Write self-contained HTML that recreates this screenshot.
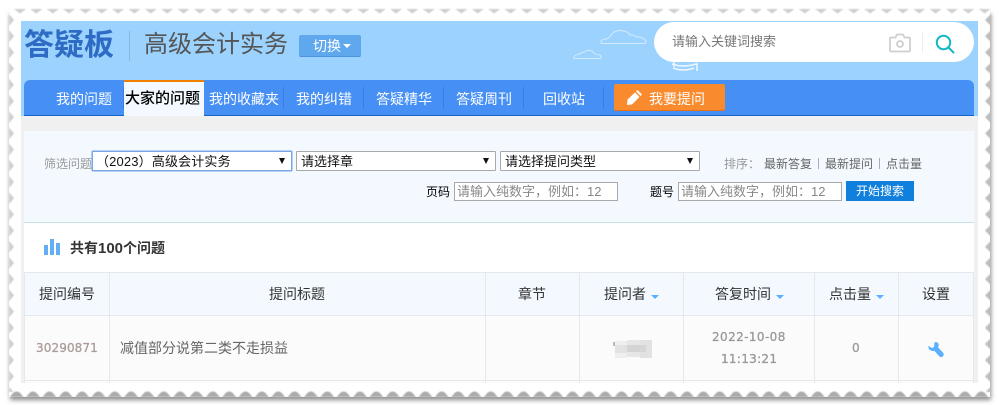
<!DOCTYPE html>
<html lang="zh">
<head>
<meta charset="utf-8">
<title>答疑板</title>
<style>
html,body{margin:0;padding:0;background:#fff;}
body{position:relative;width:999px;height:405px;overflow:hidden;font-family:"Liberation Sans","Noto Sans CJK SC",sans-serif;}
.a{position:absolute;white-space:nowrap;}
.t{position:absolute;white-space:nowrap;line-height:20px;height:20px;}
.sep{position:absolute;top:87px;width:1px;height:22px;background:#3a7fe0;}
.nav{position:absolute;top:89px;line-height:20px;font-size:14px;color:#fff;white-space:nowrap;}
.sel{position:absolute;top:151px;width:198px;height:18px;border:1px solid #a9a9a9;background:#fff;font-size:13px;line-height:20px;color:#111;border-radius:1px;}
.sel span{position:absolute;left:4px;top:0;white-space:nowrap;}
.sel i{position:absolute;right:6px;top:6px;width:0;height:0;border-left:3.5px solid transparent;border-right:3.5px solid transparent;border-top:6px solid #111;}
.inp{position:absolute;top:182px;width:162px;height:17px;border:1px solid #a9a9a9;background:#fff;font-size:13px;line-height:18px;color:#888;}
.inp span{position:absolute;left:2px;top:0;white-space:nowrap;}
.v{position:absolute;top:272px;width:1px;height:111px;background:#e6e9ec;}
.h{position:absolute;left:24px;width:950px;height:1px;background:#e6e9ec;}
.th{position:absolute;top:284px;line-height:20px;font-size:14px;color:#333;white-space:nowrap;}
.ar{position:absolute;top:295px;width:0;height:0;border-left:4px solid transparent;border-right:4px solid transparent;border-top:4px solid #5aafff;}
.dj{font-family:"DejaVu Sans",sans-serif;-webkit-text-stroke:.3px currentColor;}
</style>
</head>
<body>
<svg class="a" style="left:0;top:0" width="999" height="405" viewBox="0 0 999 405">
<defs>
<filter id="b" x="-5%" y="-5%" width="110%" height="110%"><feGaussianBlur stdDeviation="2.4"/></filter>
<filter id="s" x="-1%" y="-1%" width="102%" height="102%"><feGaussianBlur stdDeviation="0.5"/></filter>
<pattern id="pt" patternUnits="userSpaceOnUse" x="12" y="9" width="16.35" height="5"><path d="M2 0H14L8 4.5Z" fill="#cfcfcf"/></pattern>
<pattern id="pl" patternUnits="userSpaceOnUse" x="9" y="12" width="5" height="16.2"><path d="M0 2L5 8L0 14Z" fill="#cfcfcf"/></pattern>
<pattern id="pr" patternUnits="userSpaceOnUse" x="985" y="12" width="6" height="16.2"><path d="M6 2L0 8L6 14Z" fill="#bdbdbd"/></pattern>
<pattern id="pb" patternUnits="userSpaceOnUse" x="25" y="391" width="16.35" height="6"><path d="M1 6L5 1.5Q8 -.5 11 1.500L15 6Z" fill="#ababab"/></pattern>
</defs>
<rect x="10" y="14" width="981" height="386" fill="#8a8a8a" filter="url(#b)"/>
<rect x="9" y="9" width="981" height="388" fill="#fff"/>
<g filter="url(#s)">
<rect x="9" y="9" width="981" height="5" fill="url(#pt)"/>
<rect x="9" y="12" width="5" height="380" fill="url(#pl)"/>
<rect x="985" y="12" width="6" height="380" fill="url(#pr)"/>
<rect x="9" y="391" width="981" height="6" fill="url(#pb)"/>
</g>
</svg>

<!-- Header -->
<div class="a" style="left:21px;top:21px;width:957px;height:362px;background:#f0f0f0"></div>
<div class="a" style="left:21px;top:21px;width:957px;height:95px;background:#9bd2fe"></div>

<div class="a" style="left:24px;top:25px;font-size:30px;line-height:42px;font-weight:bold;color:#2e6bc4">答疑板</div>
<div class="a" style="left:129px;top:31px;width:1px;height:30px;background:#86b8e2"></div>
<div class="a" style="left:144px;top:28px;font-size:24px;line-height:34px;color:#555">高级会计实务</div>
<div class="a" style="left:299px;top:35px;width:62px;height:21px;background:#5fa8ee;border-bottom:1px solid #4b92dc;border-radius:2px"></div>
<div class="a" style="left:313px;top:36px;font-size:14px;line-height:20px;color:#fff">切换</div>
<div class="a" style="left:343px;top:44px;width:0;height:0;border-left:4px solid transparent;border-right:4px solid transparent;border-top:4px solid #fff"></div>

<svg class="a" style="left:570px;top:21px" width="140" height="55" viewBox="0 0 140 55" fill="none" stroke="#d4ebfd" stroke-width="1">
<path d="M4 37.500H30.500Q32.500 34 27 33.500Q24 33 22 30Q17 28 14 31.500Q11 31 10 33Q3 34 4 37.500Z"/>
<path d="M31 22.500Q30 18.500 36 18Q39 17 41 14Q44 9.500 51 9.500Q58 10 60 14Q64 13.500 66 16Q72 15 76 20Q76 22.500 74 22.500Z"/>
<path d="M102 43Q113 47 126 43M103 47Q113 51 124 47M127 42V50M104 41V46" stroke-width="1.500" stroke="#f0f8ff"/>
</svg>

<div class="a" style="left:654px;top:22px;width:320px;height:40px;background:#fff;border-radius:20px"></div>
<div class="t" style="left:672px;top:32px;font-size:13px;color:#777">请输入关键词搜索</div>
<svg class="a" style="left:888px;top:31px" width="24" height="24" viewBox="0 0 24 24" fill="none" stroke="#cfcfcf" stroke-width="1.800">
<path d="M3 6.500H7.500L9 3.500H15L16.500 6.500H21Q22 6.500 22 7.500V19.500Q22 20.500 21 20.500H3Q2 20.500 2 19.500V7.500Q2 6.500 3 6.500Z"/>
<circle cx="12" cy="13" r="3"/>
</svg>
<div class="a" style="left:922px;top:33px;width:1px;height:20px;background:#eee"></div>
<svg class="a" style="left:935px;top:34px" width="20" height="20" viewBox="0 0 20 20" fill="none" stroke="#14b8c4" stroke-width="2">
<circle cx="8.500" cy="8.500" r="6.700"/>
<path d="M13.500 13.500L18.500 18.500" stroke-linecap="round"/>
</svg>

<!-- Nav -->
<div class="a" style="left:24px;top:80px;width:950px;height:35px;background:#4690f5;border-bottom:1px solid #1565c8;border-radius:6px 6px 0 0"></div>
<div class="a" style="left:124px;top:80px;width:80px;height:34px;background:#f3f9ff;border-top:2px solid #f08000"></div>
<div class="nav" style="left:56px">我的问题</div>
<div class="nav" style="left:125px;font-size:15px;color:#000;font-weight:500">大家的问题</div>
<div class="nav" style="left:209px">我的收藏夹</div>
<div class="nav" style="left:296px">我的纠错</div>
<div class="nav" style="left:376px">答疑精华</div>
<div class="nav" style="left:456px">答疑周刊</div>
<div class="nav" style="left:543px">回收站</div>
<div class="sep" style="left:123px"></div>
<div class="sep" style="left:283px"></div>
<div class="sep" style="left:363px"></div>
<div class="sep" style="left:443px"></div>
<div class="sep" style="left:523px"></div>
<div class="sep" style="left:603px"></div>
<div class="a" style="left:614px;top:84px;width:111px;height:26px;background:#f98b2e;border-bottom:1px solid #e8721a;border-radius:2px"></div>
<svg class="a" style="left:626px;top:89px" width="17" height="17" viewBox="0 0 17 17" fill="#fff">
<path d="M11.500 1L16 5.500L14.500 7L10 2.500Z"/>
<path d="M9 3.500L13.500 8L6 15.500L1 16L1.500 10.500Z"/>
</svg>
<div class="nav" style="left:649px">我要提问</div>

<!-- Filter -->
<div class="a" style="left:24px;top:131px;width:950px;height:91px;background:#f3f9ff;border-bottom:1px solid #c8e4e4"></div>
<div class="t" style="left:44px;top:154px;font-size:12px;color:#999">筛选问题</div>
<div class="sel" style="left:92px;border:1px solid #7ba6e6;box-shadow:0 0 0 .5px #7ba6e6"><span style="left:3px;letter-spacing:.15px">（2023）高级会计实务</span><i></i></div>
<div class="sel" style="left:296px"><span>请选择章</span><i></i></div>
<div class="sel" style="left:500px"><span>请选择提问类型</span><i></i></div>
<div class="t" style="left:724px;top:154px;font-size:12px;color:#999">排序：</div>
<div class="t" style="left:764px;top:154px;font-size:12px;color:#666">最新答复</div>
<div class="a" style="left:818px;top:158px;width:1px;height:11px;background:#aab"></div>
<div class="t" style="left:825px;top:154px;font-size:12px;color:#666">最新提问</div>
<div class="a" style="left:879px;top:158px;width:1px;height:11px;background:#aab"></div>
<div class="t" style="left:886px;top:154px;font-size:12px;color:#666">点击量</div>

<div class="t" style="left:426px;top:182px;font-size:12px;color:#000">页码</div>
<div class="inp" style="left:454px"><span>请输入纯数字，例如：12</span></div>
<div class="t" style="left:650px;top:182px;font-size:12px;color:#000">题号</div>
<div class="inp" style="left:678px"><span>请输入纯数字，例如：12</span></div>
<div class="a" style="left:846px;top:181px;width:68px;height:20px;background:#117fdc;color:#fff;font-size:12px;line-height:21px;text-align:center">开始搜索</div>

<!-- Count -->
<div class="a" style="left:24px;top:223px;width:950px;height:160px;background:#fff"></div>
<div class="a" style="left:44px;top:245px;width:4px;height:10px;background:#63aef5"></div>
<div class="a" style="left:50px;top:239px;width:4px;height:16px;background:#63aef5"></div>
<div class="a" style="left:56px;top:243px;width:4px;height:12px;background:#63aef5"></div>
<div class="t" style="left:70px;top:238px;font-size:14px;font-weight:bold;color:#333">共有<span style="font-size:15px">100</span>个问题</div>

<!-- Table -->
<div class="a" style="left:24px;top:272px;width:950px;height:44px;background:#f3f9ff"></div>
<div class="a" style="left:24px;top:316px;width:950px;height:67px;background:#fbfbfb"></div>
<div class="h" style="top:272px"></div>
<div class="h" style="top:315px"></div>
<div class="h" style="top:380px"></div>
<div class="v" style="left:24px"></div>
<div class="v" style="left:109px"></div>
<div class="v" style="left:485px"></div>
<div class="v" style="left:579px"></div>
<div class="v" style="left:683px"></div>
<div class="v" style="left:814px"></div>
<div class="v" style="left:898px"></div>
<div class="v" style="left:973px"></div>

<div class="th" style="left:39px">提问编号</div>
<div class="th" style="left:269px">提问标题</div>
<div class="th" style="left:518px">章节</div>
<div class="th" style="left:604px">提问者</div>
<div class="ar" style="left:651px"></div>
<div class="th" style="left:715px">答复时间</div>
<div class="ar" style="left:776px"></div>
<div class="th" style="left:829px">点击量</div>
<div class="ar" style="left:876px"></div>
<div class="th" style="left:922px">设置</div>

<div class="t dj" style="left:36px;top:338px;font-size:12px;color:#ab9c98;letter-spacing:.1px">30290871</div>
<div class="t" style="left:120px;top:338px;font-size:14px;color:#666">减值部分说第二类不走损益</div>

<svg class="a" style="left:613px;top:340px" width="39" height="18" viewBox="0 0 39 18" shape-rendering="crispEdges">
<rect x="2" y="1" width="12" height="17" fill="#eee"/>
<rect x="0" y="2" width="2" height="4" fill="#bbb"/>
<rect x="2" y="5" width="12" height="8" fill="#e2e2e2"/>
<rect x="14" y="0" width="13" height="17" fill="#e6e6e6"/>
<rect x="14" y="5" width="13" height="7" fill="#d4d4d4"/>
<rect x="27" y="0" width="12" height="18" fill="#e2e2e2"/>
<rect x="27" y="5" width="6" height="7" fill="#d6d6d6"/>
</svg>

<div class="t dj" style="left:712px;top:327px;font-size:12px;color:#999;letter-spacing:.4px">2022-10-08</div>
<div class="t dj" style="left:721px;top:349px;font-size:12px;color:#999;letter-spacing:.3px">11:13:21</div>
<div class="t dj" style="left:852px;top:338px;font-size:12px;color:#999">0</div>
<svg class="a" style="left:928px;top:342px" width="16" height="16" viewBox="0 0 16 16" fill="#5aafff">
<path d="M6.500 0.300Q9.500 -.5 10.500 2Q11 3.800 10 5.200L15.300 11Q16.400 12.500 15 14.200Q13.500 15.700 11.800 14.700L6.300 8.700Q4 9.500 2 8Q0 6.500 .5 3.700L3.500 6L6 5.300L6.300 3Z"/>
</svg>
</body>
</html>
